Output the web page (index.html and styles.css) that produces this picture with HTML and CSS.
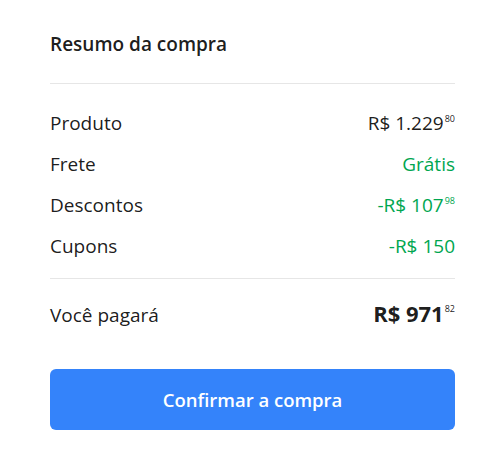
FILE: index.html
```html
<html>
  <head>
    <link rel="stylesheet" href="styles.css">
    <title>Resumo da compra</title>
  </head>
  <body>
    <div class="summary">
      <h2 class="summary-title">Resumo da compra</h2>

      <div class="summary-rows">
        <div class="row">
          <span>Produto</span>
          <span class="price">R$ 1.229<sup>80</sup></span>
        </div>
        <div class="row">
          <span>Frete</span>
          <span class="price green">Grátis</span>
        </div>
        <div class="row">
          <span>Descontos</span>
          <span class="price green">-R$ 107<sup>98</sup></span>
        </div>
        <div class="row">
          <span>Cupons</span>
          <span class="price green">-R$ 150</span>
        </div>
      </div>

      <div class="summary-total">
        <span>Você pagará</span>
        <span class="total-price">R$ 971<sup>82</sup></span>
      </div>

      <button class="confirm">Confirmar a compra</button>
    </div>
  </body>
</html>
```

FILE: styles.css
```css
body {
  margin: 0;
  background: #fff;
  font-family: "Open Sans", sans-serif;
  color: rgba(0, 0, 0, 0.9);
}

.summary {
  width: 405px;
  padding: 32px 45px 0 50px;
}

.summary-title {
  margin: 0;
  font-size: 19px;
  font-weight: 600;
  line-height: 24px;
  padding-bottom: 27px;
  border-bottom: 1px solid #e6e6e6;
}

.summary-rows {
  padding: 27px 0 20px;
  border-bottom: 1px solid #e6e6e6;
}

.row,
.summary-total {
  display: flex;
  justify-content: space-between;
  align-items: baseline;
  font-size: 19px;
  line-height: 24px;
}

.row + .row {
  margin-top: 17px;
}

.price sup,
.total-price sup {
  font-size: 9px;
  font-weight: 400;
  vertical-align: top;
  line-height: 12px;
  margin-left: 1px;
  position: relative;
  top: 2px;
}

.green {
  color: #00a650;
}

.summary-total {
  padding-top: 22px;
}

.total-price {
  font-size: 22px;
  font-weight: 700;
}

.confirm {
  display: block;
  width: 100%;
  height: 61px;
  margin-top: 42px;
  border: none;
  border-radius: 6px;
  background: #3483fa;
  color: #fff;
  font-family: "Open Sans", sans-serif;
  font-size: 18.5px;
  font-weight: 600;
}
```
